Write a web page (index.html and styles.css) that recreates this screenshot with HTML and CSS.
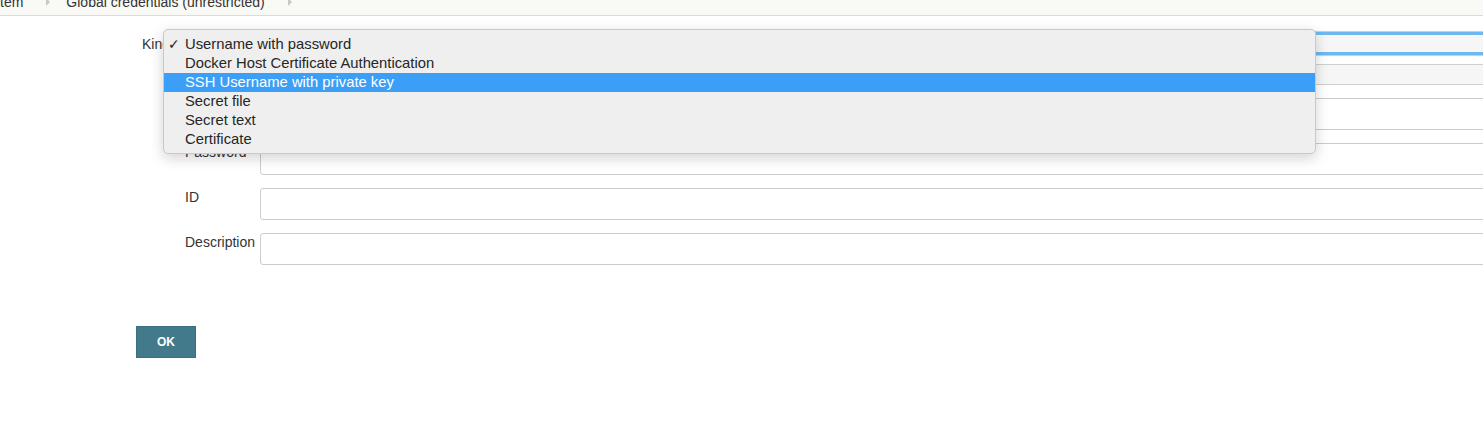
FILE: index.html
```html
<!DOCTYPE html>
<html>
<head>
<meta charset="utf-8">
<link rel="stylesheet" href="styles.css">
</head>
<body>
<div class="crumbs">
  <div class="crumbs-inner">
    <span class="crumb">tem</span>
    <span class="arrow"></span>
    <span class="crumb">Global credentials (unrestricted)</span>
    <span class="arrow"></span>
  </div>
</div>
<div class="page">
  <div class="form">
    <div class="row row-kind">
      <div class="label label-kind">Kind</div>
      <div class="select-focus"><div class="select-inner"></div></div>
    </div>
    <div class="row row-scope">
      <div class="label"></div>
      <div class="scope"></div>
    </div>
    <div class="row">
      <div class="label">Username</div>
      <div class="input"></div>
    </div>
    <div class="row">
      <div class="label">Password</div>
      <div class="input"></div>
    </div>
    <div class="row">
      <div class="label">ID</div>
      <div class="input"></div>
    </div>
    <div class="row">
      <div class="label">Description</div>
      <div class="input"></div>
    </div>
  </div>
  <button class="ok">OK</button>

  <div class="menu">
    <div class="item"><span class="check">✓</span>Username with password</div>
    <div class="item">Docker Host Certificate Authentication</div>
    <div class="item selected">SSH Username with private key</div>
    <div class="item">Secret file</div>
    <div class="item">Secret text</div>
    <div class="item">Certificate</div>
  </div>
</div>
</body>
</html>
```
FILE: styles.css
```css
html, body {
  margin: 0;
  padding: 0;
  background: #fff;
  overflow: hidden;
  font-family: "Liberation Sans", Arial, sans-serif;
  font-size: 14px;
  color: #333;
}
.crumbs {
  height: 15px;
  background: #f9faf5;
  border-bottom: 1px solid #dcddd8;
  overflow: hidden;
}
.crumbs-inner {
  display: flex;
  align-items: center;
  margin-top: -6px;
  height: 16px;
  line-height: 16px;
  color: #333;
}
.crumb { white-space: nowrap; }
.arrow {
  width: 0;
  height: 0;
  border-top: 4px solid transparent;
  border-bottom: 4px solid transparent;
  border-left: 4px solid #c8c8c8;
  margin: 0 16px 0 23px;
}
.page {
  position: relative;
  padding: 16px 0 0 136px;
}
.form {
  display: flex;
  flex-direction: column;
}
.row {
  display: flex;
  align-items: flex-start;
  margin-bottom: 13px;
}
.label {
  width: 75px;
  flex: none;
  padding-left: 49px;
  padding-top: 1px;
  line-height: 16px;
  color: #333;
}
.row-kind { margin-bottom: 9px; height: 23px; }
.row-kind .label { padding-left: 6px; width: 118px; padding-top: 4px; }
.select-focus {
  flex: none;
  width: 1400px;
  height: 17px;
  border: 3px solid #6db8ef;
  border-radius: 3px;
  box-shadow: 0 0 1px 1px #a7d6f7;
}
.select-inner { height: 100%; background: #f6f6f6; }
.row-scope { margin-bottom: 13px; }
.scope {
  flex: none;
  width: 1400px;
  height: 19px;
  background: #f6f6f6;
  border-top: 1px solid #cfcfcf;
  border-bottom: 1px solid #cfcfcf;
}
.row-scope .label { padding-top: 0; height: 21px; }
.input {
  flex: none;
  width: 1400px;
  height: 30px;
  border: 1px solid #cccccc;
  border-radius: 3px;
  background: #fff;
}
.ok {
  margin-top: 48px;
  width: 60px;
  height: 32px;
  background: #437a8b;
  border: 1px solid #3a6f80;
  color: #fff;
  font-family: "Liberation Sans", Arial, sans-serif;
  font-weight: bold;
  font-size: 12px;
  padding: 0;
  display: block;
}
.menu {
  position: absolute;
  left: 163px;
  top: 13px;
  width: 1153px;
  padding: 5px 0 4px;
  background: #efefef;
  border: 1px solid #c9c9c9;
  border-radius: 5px;
  box-sizing: border-box;
  box-shadow: 0 4px 14px rgba(0,0,0,0.18);
  font-size: 14.8px;
}
.item {
  position: relative;
  height: 19px;
  line-height: 19px;
  padding-left: 21px;
  color: #262626;
  white-space: nowrap;
}
.item.selected {
  background: #3b9ff8;
  color: #fff;
}
.check {
  position: absolute;
  left: 4px;
  top: 0;
  font-family: "DejaVu Sans", sans-serif;
  font-size: 14px;
}
```
